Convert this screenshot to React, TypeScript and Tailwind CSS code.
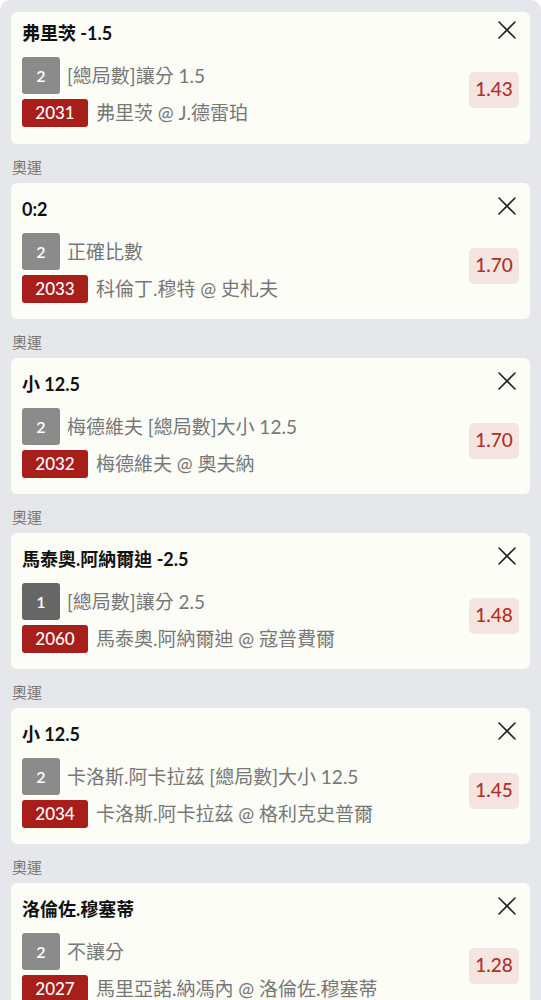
import React from "react";

type Bet = {
  title: string;
  num: string;
  dark?: boolean;
  desc: string;
  code: string;
  match: React.ReactNode;
  odds: string;
};

const bets: Bet[] = [
  { title: "弗里茨 -1.5", num: "2", desc: "[總局數]讓分 1.5", code: "2031", match: "弗里茨 @ J.德雷珀", odds: "1.43" },
  { title: "0:2", num: "2", desc: "正確比數", code: "2033", match: "科倫丁.穆特 @ 史札夫", odds: "1.70" },
  { title: "小 12.5", num: "2", desc: "梅德維夫 [總局數]大小 12.5", code: "2032", match: "梅德維夫 @ 奧夫納", odds: "1.70" },
  { title: "馬泰奧.阿納爾迪 -2.5", num: "1", dark: true, desc: "[總局數]讓分 2.5", code: "2060", match: "馬泰奧.阿納爾迪 @ 寇普費爾", odds: "1.48" },
  { title: "小 12.5", num: "2", desc: "卡洛斯.阿卡拉茲 [總局數]大小 12.5", code: "2034", match: "卡洛斯.阿卡拉茲 @ 格利克史普爾", odds: "1.45" },
  {
    title: "洛倫佐.穆塞蒂",
    num: "2",
    desc: "不讓分",
    code: "2027",
    match: (
      <>
        馬里亞諾<span className="underline decoration-[#777] underline-offset-[4px]">.納馮內 @ 洛倫佐.</span>穆塞蒂
      </>
    ),
    odds: "1.28",
  },
];

const font = { fontFamily: "Lato, 'Noto Sans CJK TC', sans-serif" };

function CloseIcon() {
  return (
    <svg width="18" height="18" viewBox="0 0 18 18" fill="none">
      <path d="M1 1L17 17M17 1L1 17" stroke="#222" strokeWidth="1.6" strokeLinecap="round" />
    </svg>
  );
}

function Card({ bet, first }: { bet: Bet; first?: boolean }) {
  return (
    <div className={`rounded-[6px] bg-[#fdfdf7] pl-[11px] pr-[11px] ${first ? "pt-[10px] pb-[17px]" : "pt-[15px] pb-[16px]"}`}>
      <div className="flex items-center justify-between h-[22px]">
        <div className="text-[18px] font-bold text-[#111] leading-[22px]">{bet.title}</div>
        <div className="mr-[3px] -mt-[6px]">
          <CloseIcon />
        </div>
      </div>
      <div className="flex items-center justify-between mt-[13px]">
        <div className="flex flex-col gap-[5px]">
          <div className="flex items-center">
            <div
              className={`w-[38px] h-[37px] rounded-[3px] flex items-center justify-center text-white text-[16px] font-semibold ${
                bet.dark ? "bg-[#666666]" : "bg-[#8b8b8b]"
              }`}
            >
              {bet.num}
            </div>
            <div className="ml-[7px] text-[19px] text-[#777] leading-[24px]">{bet.desc}</div>
          </div>
          <div className="flex items-center">
            <div className="w-[66px] h-[28px] rounded-[3px] bg-[#a81e1a] flex items-center justify-center text-white text-[17px] font-medium">
              {bet.code}
            </div>
            <div className="ml-[8px] text-[19px] text-[#777] leading-[24px]">{bet.match}</div>
          </div>
        </div>
        <div className="w-[50px] h-[36px] rounded-[5px] bg-[#f5e5e0] flex items-center justify-center text-[19px] text-[#b0302a] font-medium mb-[5px]">
          {bet.odds}
        </div>
      </div>
    </div>
  );
}

export default function App() {
  return (
    <div className="bg-white min-h-[1000px]" style={font}>
      <div className="bg-[#e6e7ea] rounded-t-[10px] px-[11px] pt-[12px] min-h-[1000px]">
        {bets.map((b, i) => (
          <React.Fragment key={i}>
            {i > 0 && (
              <div className="pt-[13px] pb-[6px] text-[15px] leading-[20px] text-[#777] pl-[1px]">奧運</div>
            )}
            <Card bet={b} first={i === 0} />
          </React.Fragment>
        ))}
      </div>
    </div>
  );
}
